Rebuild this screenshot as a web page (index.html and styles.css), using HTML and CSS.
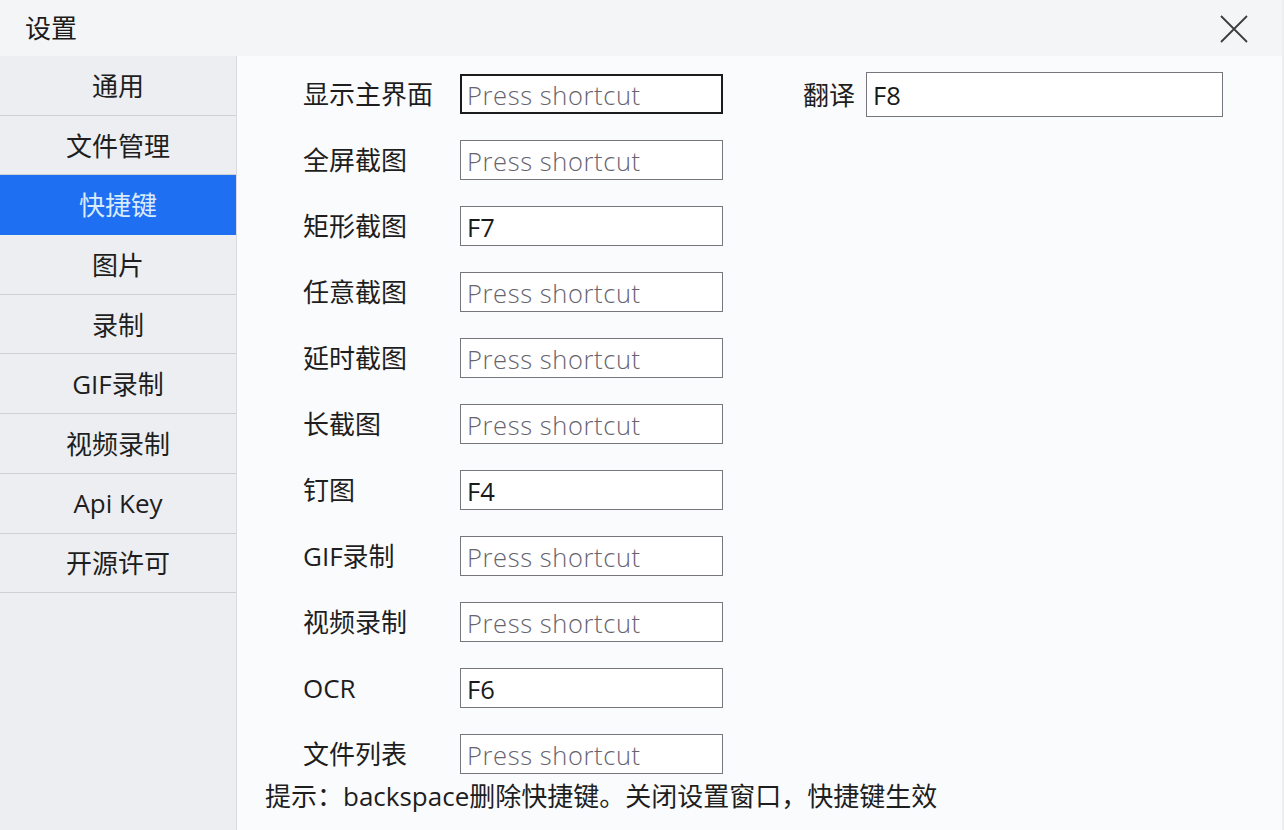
FILE: index.html
```html
<!DOCTYPE html>
<html lang="zh-CN">
<head>
<meta charset="utf-8">
<title>设置</title>
<link rel="stylesheet" href="styles.css">
</head>
<body>
<div class="window">
  <div class="titlebar">
    <div class="title">设置</div>
    <button class="close" aria-label="关闭">
      <svg width="28" height="28" viewBox="0 0 28 28"><path d="M1 1 L27 27 M27 1 L1 27" stroke="#3c3c3c" stroke-width="1.8" fill="none"/></svg>
    </button>
  </div>
  <div class="main">
    <nav class="sidebar">
      <div class="nav-item">通用</div>
      <div class="nav-item">文件管理</div>
      <div class="nav-item active">快捷键</div>
      <div class="nav-item">图片</div>
      <div class="nav-item">录制</div>
      <div class="nav-item">GIF录制</div>
      <div class="nav-item">视频录制</div>
      <div class="nav-item">Api Key</div>
      <div class="nav-item">开源许可</div>
    </nav>
    <section class="content">
      <div class="forms">
        <div class="form-col">
          <div class="row"><label class="lbl">显示主界面</label><input class="key focused" placeholder="Press shortcut"></div>
          <div class="row"><label class="lbl">全屏截图</label><input class="key" placeholder="Press shortcut"></div>
          <div class="row"><label class="lbl">矩形截图</label><input class="key" value="F7"></div>
          <div class="row"><label class="lbl">任意截图</label><input class="key" placeholder="Press shortcut"></div>
          <div class="row"><label class="lbl">延时截图</label><input class="key" placeholder="Press shortcut"></div>
          <div class="row"><label class="lbl">长截图</label><input class="key" placeholder="Press shortcut"></div>
          <div class="row"><label class="lbl">钉图</label><input class="key" value="F4"></div>
          <div class="row"><label class="lbl">GIF录制</label><input class="key" placeholder="Press shortcut"></div>
          <div class="row"><label class="lbl">视频录制</label><input class="key" placeholder="Press shortcut"></div>
          <div class="row"><label class="lbl">OCR</label><input class="key" value="F6"></div>
          <div class="row"><label class="lbl">文件列表</label><input class="key" placeholder="Press shortcut"></div>
        </div>
        <div class="form-col right">
          <div class="row"><label class="lbl short">翻译</label><input class="key wide" value="F8"></div>
        </div>
      </div>
      <p class="hint">提示：backspace删除快捷键。关闭设置窗口，快捷键生效</p>
    </section>
  </div>
</div>
</body>
</html>
```
FILE: styles.css
```css
* { box-sizing: border-box; }
html, body { margin: 0; padding: 0; }
body {
  width: 1284px;
  height: 830px;
  overflow: hidden;
  background: #fafbfd;
  font-family: "Open Sans", "Noto Sans CJK SC", sans-serif;
  color: #1b1b1b;
}
.window {
  width: 1284px;
  height: 830px;
  display: flex;
  flex-direction: column;
  border-right: 2px solid #eceef0;
}
.titlebar {
  height: 56px;
  flex: none;
  background: #f4f5f7;
  display: flex;
  align-items: center;
  justify-content: space-between;
  padding: 0 34px 0 25px;
}
.title {
  font-family: "Noto Sans CJK SC", sans-serif;
  font-size: 26px;
  line-height: 1;
  margin-top: -2px;
}
.close {
  border: 0;
  background: transparent;
  padding: 0;
  width: 28px;
  height: 28px;
  display: flex;
  margin-top: 1px;
}
.main {
  flex: 1;
  display: flex;
  min-height: 0;
}
.sidebar {
  width: 237px;
  flex: none;
  background: #eceef2;
  border-right: 1px solid #d9dadd;
  display: flex;
  flex-direction: column;
}
.nav-item {
  height: 59.7px;
  border-bottom: 1px solid #cfd0d3;
  display: flex;
  align-items: center;
  justify-content: center;
  font-family: "Open Sans", "Noto Sans CJK SC", sans-serif;
  font-size: 26px;
  color: #1e1e1e;
  padding-bottom: 1px;
}
.nav-item.active {
  background: #1e6ff1;
  color: #d9ebff;
  border-bottom-color: #1e6ff1;
}
.content {
  flex: 1;
  display: flex;
  flex-direction: column;
  padding: 18px 0 0 28px;
}
.forms {
  display: flex;
  gap: 80px;
  padding-left: 38px;
}
.form-col {
  display: flex;
  flex-direction: column;
  gap: 26px;
}
.form-col.right { margin-top: -2px; }
.row {
  display: flex;
  align-items: center;
}
.lbl {
  width: 157px;
  font-size: 26px;
  line-height: 1;
  font-family: "Open Sans", "Noto Sans CJK SC", sans-serif;
  color: #1e1e1e;
}
.lbl.short { width: 63px; }
.key {
  width: 263px;
  height: 40px;
  border: 1px solid #77767c;
  background: #ffffff;
  font-family: "Open Sans", "Noto Sans CJK SC", sans-serif;
  font-size: 25.5px;
  font-weight: 400;
  color: #1a1a1a;
  padding: 1px 0 0 6px;
  margin: 0;
  outline: none;
  border-radius: 0;
}
.key::placeholder { color: #67636f; font-weight: 300; letter-spacing: 0.6px; }
.key.focused { border: 2px solid #1c1c1c; padding-left: 5px; }
.key.wide { width: 357px; height: 45px; }
.hint {
  margin: 6px 0 0 0;
  font-size: 26px;
  line-height: 1.3;
  font-family: "Open Sans", "Noto Sans CJK SC", sans-serif;
  color: #1e1e1e;
}
```
